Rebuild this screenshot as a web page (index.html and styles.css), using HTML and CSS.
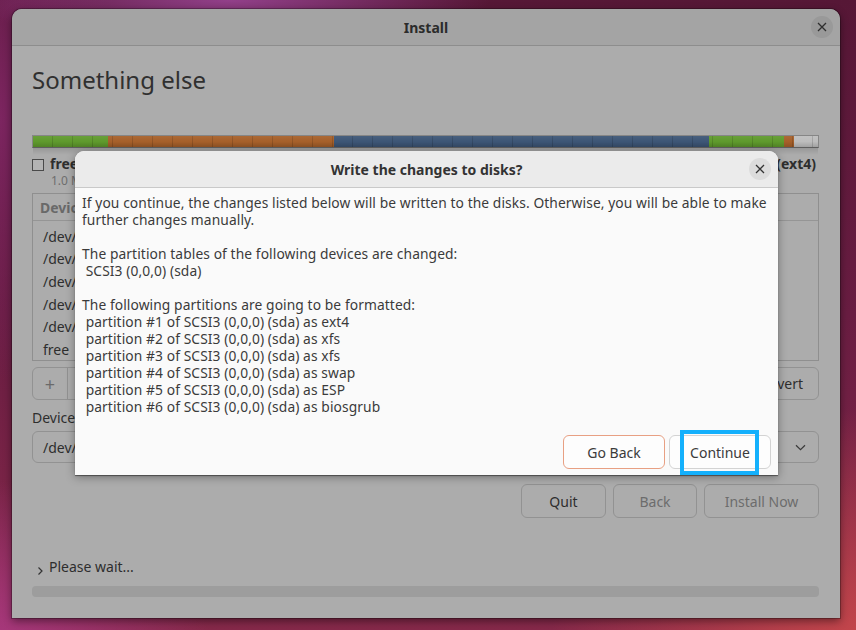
FILE: index.html
```html
<!DOCTYPE html>
<html>
<head>
<meta charset="utf-8">
<title>Install</title>
<link rel="stylesheet" href="styles.css">
</head>
<body>
<div class="desktop">
  <div class="window">
    <div class="titlebar">
      <span class="title">Install</span>
      <span class="close main-close"><svg width="10" height="10" viewBox="0 0 10 10"><path d="M1 1L9 9M9 1L1 9" stroke="#2e2e2e" stroke-width="1.3" fill="none"/></svg></span>
    </div>
    <div class="content">
      <h1 class="heading">Something else</h1>
      <div class="pbar">
        <div class="seg seg-green" style="width:75px"></div>
        <div class="seg seg-orange" style="width:226px"></div>
        <div class="seg seg-blue" style="width:375px"></div>
        <div class="seg seg-green" style="width:75px"></div>
        <div class="seg seg-orange" style="width:10px"></div>
        <div class="seg seg-grey"></div>
      </div>
      <div class="legend">
        <div class="legend-item">
          <span class="check"></span>
          <div class="legend-text">
            <div class="legend-name">free</div>
            <div class="legend-size">1.0 M</div>
          </div>
        </div>
        <div class="legend-item">
          <div class="legend-text">
            <div class="legend-name">(ext4)</div>
          </div>
        </div>
      </div>
      <div class="ptable">
        <div class="ptable-head">
          <span class="col-dev">Devic</span>
        </div>
        <div class="ptable-body">
          <div class="prow"><span class="col-dev">/dev/</span></div>
          <div class="prow"><span class="col-dev">/dev/</span></div>
          <div class="prow"><span class="col-dev">/dev/</span></div>
          <div class="prow"><span class="col-dev">/dev/</span></div>
          <div class="prow"><span class="col-dev">/dev/</span></div>
          <div class="prow"><span class="col-dev">free</span></div>
        </div>
      </div>
      <div class="tools">
        <div class="toolgroup">
          <span class="tbtn">+</span><span class="tbtn blank"></span>
        </div>
        <span class="btn revert">Revert</span>
      </div>
      <div class="devlabel">Device</div>
      <div class="combo">
        <span>/dev/</span>
        <svg class="chev" width="11" height="7" viewBox="0 0 11 7"><path d="M1 1.2L5.5 5.6L10 1.2" stroke="#3a3a3a" stroke-width="1.2" fill="none"/></svg>
      </div>
      <div class="actions">
        <span class="btn act quit">Quit</span>
        <span class="btn act back dim">Back</span>
        <span class="btn act install dim">Install Now</span>
      </div>
      <div class="status">
        <svg class="status-chev" width="7" height="10" viewBox="0 0 7 10"><path d="M1.5 1.5L5 5L1.5 8.5" stroke="#333" stroke-width="1.2" fill="none"/></svg>
        <span>Please wait...</span>
      </div>
      <div class="progress"></div>
    </div>
  </div>

  <div class="dialog">
    <div class="dlg-head">
      <span class="dlg-title">Write the changes to disks?</span>
      <span class="close dlg-close"><svg width="10" height="10" viewBox="0 0 10 10"><path d="M1 1L9 9M9 1L1 9" stroke="#333" stroke-width="1.3" fill="none"/></svg></span>
    </div>
    <div class="dlg-body">
<div class="line">If you continue, the changes listed below will be written to the disks. Otherwise, you will be able to make</div><div class="line">further changes manually.</div><div class="line gap"></div><div class="line">The partition tables of the following devices are changed:</div><div class="line"> SCSI3 (0,0,0) (sda)</div><div class="line gap"></div><div class="line">The following partitions are going to be formatted:</div><div class="line"> partition #1 of SCSI3 (0,0,0) (sda) as ext4</div><div class="line"> partition #2 of SCSI3 (0,0,0) (sda) as xfs</div><div class="line"> partition #3 of SCSI3 (0,0,0) (sda) as xfs</div><div class="line"> partition #4 of SCSI3 (0,0,0) (sda) as swap</div><div class="line"> partition #5 of SCSI3 (0,0,0) (sda) as ESP</div><div class="line"> partition #6 of SCSI3 (0,0,0) (sda) as biosgrub</div>
    </div>
    <div class="dlg-foot">
      <span class="dbtn goback">Go Back</span>
      <span class="dbtn cont">Continue<span class="focus-ring"></span></span>
    </div>
  </div>
</div>
</body>
</html>
```

FILE: styles.css
```css
* { box-sizing: border-box; margin: 0; padding: 0; }
html, body { width: 856px; height: 630px; overflow: hidden; }
body {
  font-family: "Noto Sans", "DejaVu Sans", sans-serif;
  font-size: 14px;
  color: #2e2e2e;
}

.desktop {
  position: relative;
  width: 856px;
  height: 630px;
  background:
    radial-gradient(ellipse 320px 240px at 870px 650px, #c8484b 0%, rgba(200,72,75,0) 100%),
    radial-gradient(ellipse 240px 170px at -30px 650px, #ac3a84 0%, rgba(172,58,132,0) 100%),
    radial-gradient(ellipse 260px 45px at 230px 0px, #92408a 0%, rgba(146,64,138,0) 100%),
    radial-gradient(ellipse 120px 260px at 0px 120px, #7c2560 0%, rgba(124,37,96,0) 100%),
    linear-gradient(180deg, #561736 0%, #691d42 50%, #86294a 100%);
}

/* ---------- main window ---------- */
.window {
  position: absolute;
  left: 12px;
  top: 9px;
  width: 828px;
  height: 609px;
  background: #acacac;
  border-radius: 10px 10px 0 0;
  box-shadow: 0 0 0 1px rgba(0,0,0,0.25), 0 3px 8px rgba(0,0,0,0.45);
  display: flex;
  flex-direction: column;
  overflow: hidden;
}

.titlebar {
  flex: none;
  height: 37px;
  background: #a4a4a4;
  border-bottom: 1px solid #8d8d8d;
  display: grid;
  grid-template-columns: 1fr auto 1fr;
  align-items: center;
}
.title {
  grid-column: 2;
  font-weight: 700;
  color: #2b2b2b;
}
.close {
  width: 22px;
  height: 22px;
  border-radius: 50%;
  display: flex;
  align-items: center;
  justify-content: center;
}
.main-close {
  grid-column: 3;
  justify-self: end;
  margin-right: 7px;
  background: #999999;
}

.content {
  flex: 1;
  display: flex;
  flex-direction: column;
  padding: 0 21px 0 20px;
}

.heading {
  margin-top: 19px;
  font-size: 24px;
  font-weight: 400;
  line-height: 30px;
  color: #303030;
}

/* partition bar */
.pbar {
  position: relative;
  margin-top: 40px;
  height: 13px;
  display: flex;
  border: 1px solid rgba(0,0,0,0.22);
  border-bottom-color: rgba(0,0,0,0.45);
}
.pbar::after {
  content: "";
  position: absolute;
  inset: 0;
  background:
    linear-gradient(180deg, rgba(255,255,255,0.06) 0%, rgba(0,0,0,0) 50%, rgba(0,0,0,0.15) 100%),
    repeating-linear-gradient(90deg, rgba(0,0,0,0) 0 19px, rgba(0,0,0,0.14) 19px 20px);
}
.pbar::before {
  content: "";
  position: absolute;
  left: 0;
  right: 0;
  top: 12px;
  height: 7px;
  background: linear-gradient(180deg, rgba(0,0,0,0.12), rgba(0,0,0,0));
}
.seg { height: 100%; flex: none; }
.seg-green { background: #5f9a2d; }
.seg-orange { background: #a6602a; }
.seg-blue { background: #3d5676; }
.seg-grey { background: #bdbdbd; flex: 1; }

/* legend */
.legend {
  margin-top: 7px;
  height: 33px;
  display: flex;
  justify-content: space-between;
}
.legend-item {
  display: flex;
  align-items: flex-start;
  gap: 6px;
}
.check {
  margin-top: 4px;
  width: 12px;
  height: 12px;
  border: 1px solid #4a4a4a;
  background: #b4b4b4;
}
.legend-name {
  font-weight: 700;
  line-height: 18px;
  color: #2e2e2e;
}
.legend-size {
  font-size: 12px;
  line-height: 15px;
  color: #6e6e6e;
  padding-left: 1px;
}
.legend-item:last-child { margin-right: 3px; }

/* partition table */
.ptable {
  margin-top: 5px;
  height: 168px;
  border: 1px solid #8f8f8f;
  display: flex;
  flex-direction: column;
}
.ptable-head {
  flex: none;
  height: 27px;
  border-bottom: 1px solid #959595;
  display: flex;
  align-items: center;
  padding-left: 7px;
  font-weight: 700;
  color: #696969;
}
.ptable-body {
  padding-top: 4px;
  display: flex;
  flex-direction: column;
}
.prow {
  height: 22.6px;
  display: flex;
  align-items: center;
  padding-left: 10px;
  color: #2e2e2e;
}

/* tools */
.tools {
  margin-top: 6px;
  height: 33px;
  display: flex;
  justify-content: space-between;
}
.toolgroup {
  display: flex;
  border: 1px solid #929292;
  border-radius: 6px;
}
.tbtn {
  display: flex;
  align-items: center;
  justify-content: center;
  width: 35px;
  border-right: 1px solid #929292;
  color: #6a6a6a;
  font-size: 18px;
}
.tbtn.blank { border-right: none; width: 40px; }
.btn {
  display: flex;
  align-items: center;
  justify-content: center;
  border: 1px solid #929292;
  border-radius: 6px;
  color: #2e2e2e;
}
.revert { padding: 0 15px; }

.devlabel {
  margin-top: 9px;
  line-height: 17px;
  color: #2e2e2e;
}

.combo {
  margin-top: 5px;
  height: 32px;
  border: 1px solid #929292;
  border-radius: 6px;
  display: flex;
  align-items: center;
  justify-content: space-between;
  padding: 0 12px 0 10px;
}

.actions {
  margin-top: 21px;
  height: 34px;
  display: flex;
  justify-content: flex-end;
  gap: 7px;
}
.act { height: 34px; }
.quit { width: 85px; }
.back { width: 84px; }
.install { width: 115px; }
.dim { color: #6c6c6c; }

.status {
  margin-top: 40px;
  display: flex;
  align-items: center;
  gap: 5px;
  line-height: 18px;
  padding-left: 5px;
}
.status-chev { margin-top: 8px; }

.progress {
  margin-top: 10px;
  height: 11px;
  border-radius: 4px;
  background: #9d9d9d;
}

/* ---------- dialog ---------- */
.dialog {
  position: absolute;
  left: 75px;
  top: 151px;
  width: 703px;
  height: 324px;
  background: #fafafa;
  border-radius: 9px 9px 0 0;
  box-shadow: 0 1px 1px rgba(0,0,0,0.45), 0 2px 10px rgba(0,0,0,0.35);
  display: flex;
  flex-direction: column;
  overflow: hidden;
  color: #3b3b3b;
}
.dlg-head {
  flex: none;
  height: 37px;
  background: #ebebeb;
  border-bottom: 1px solid #c9c9c9;
  display: grid;
  grid-template-columns: 1fr auto 1fr;
  align-items: center;
}
.dlg-title {
  grid-column: 2;
  font-weight: 700;
  color: #333333;
}
.dlg-close {
  grid-column: 3;
  justify-self: end;
  margin-right: 7px;
  background: #dcdcdc;
}
.dlg-body {
  flex: 1;
  padding: 6px 7px 0 7px;
  font-size: 13.8px;
  letter-spacing: 0.09px;
}
.line {
  white-space: pre;
  line-height: 17px;
  height: 17px;
}
.dlg-foot {
  flex: none;
  display: flex;
  justify-content: flex-end;
  gap: 4px;
  padding: 0 7px 6px 0;
}
.dbtn {
  position: relative;
  width: 102px;
  height: 34px;
  display: flex;
  align-items: center;
  justify-content: center;
  border-radius: 6px;
  background: #fdfdfd;
  color: #3b3b3b;
}
.goback { border: 1px solid #e8a083; }
.cont { border: 1px solid #d3d3d3; }
.focus-ring {
  position: absolute;
  left: 10px;
  top: -6px;
  width: 79px;
  height: 45px;
  border: 4px solid #14b0fc;
}
```
